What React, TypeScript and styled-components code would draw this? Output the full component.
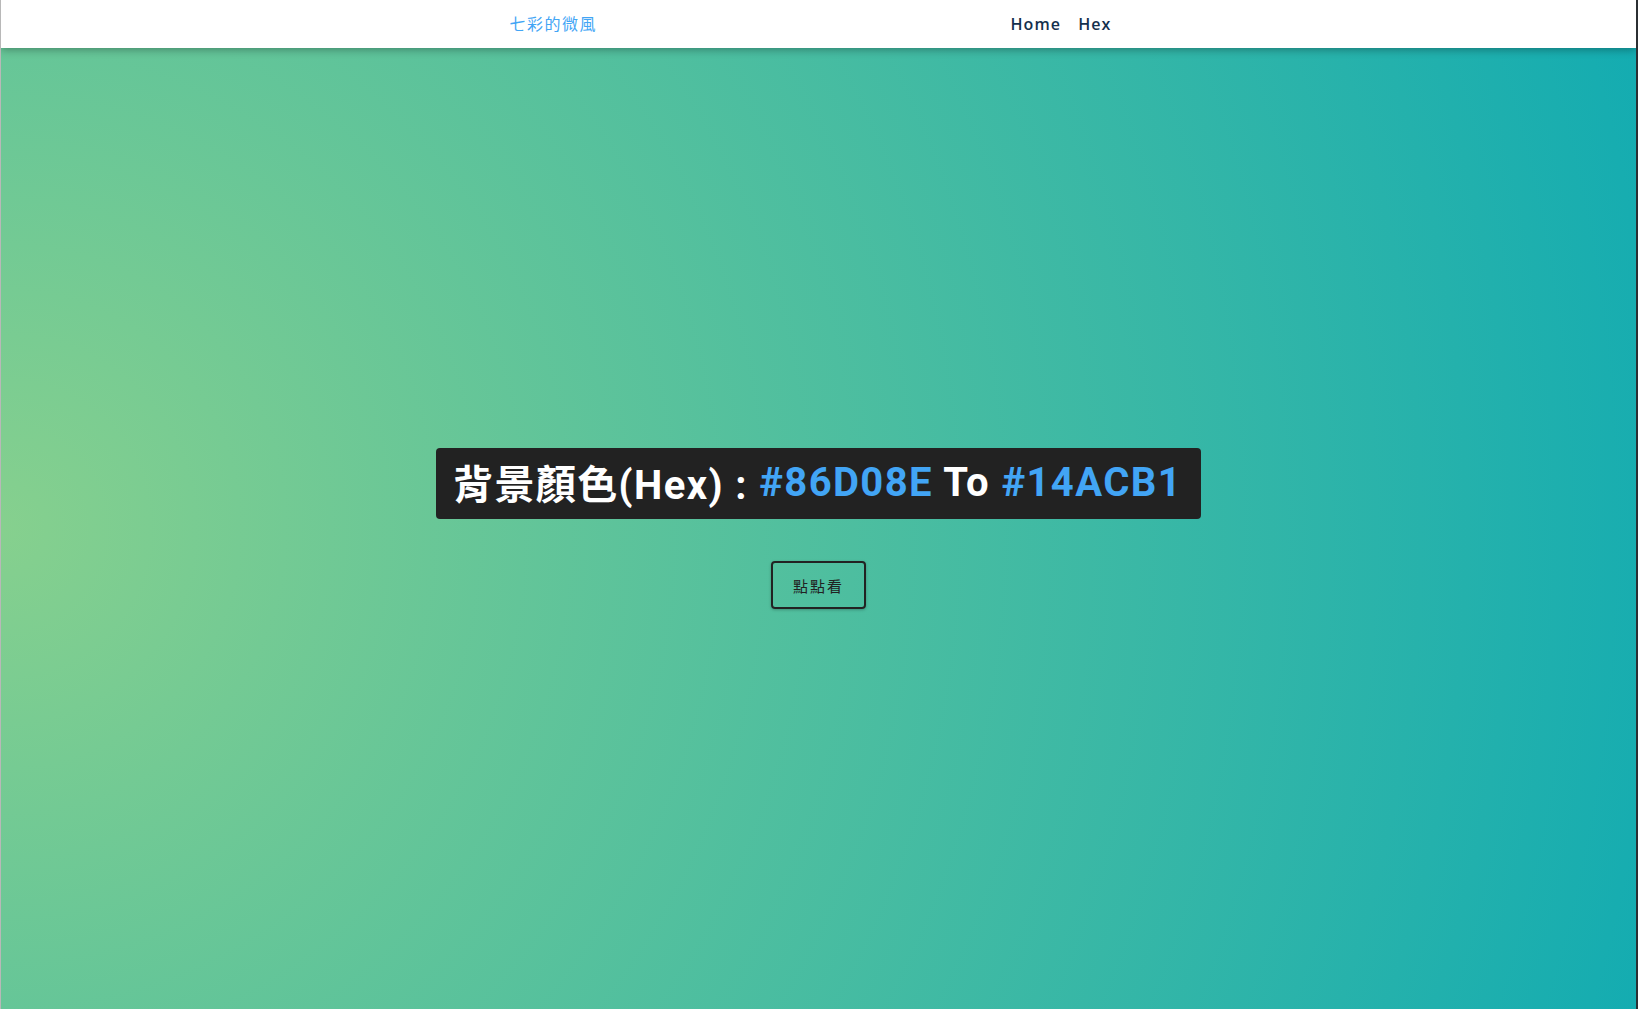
import React, { useState } from "react";
import styled, { createGlobalStyle } from "styled-components";

const GlobalStyle = createGlobalStyle`
  * {
    box-sizing: border-box;
  }
  html,
  body {
    margin: 0;
    padding: 0;
    height: 100%;
  }
  body {
    font-family: Roboto, "Noto Sans CJK TC", sans-serif;
    border-left: 1px solid #b8b8b8;
    border-right: 2px solid #2b2f33;
    overflow: hidden;
  }
`;

const Page = styled.div`
  display: flex;
  flex-direction: column;
  height: 100vh;
`;

const Header = styled.header`
  position: relative;
  z-index: 2;
  height: 48px;
  flex-shrink: 0;
  background: #fff;
  box-shadow: 0 2px 8px rgba(0, 0, 0, 0.3);
`;

const HeaderInner = styled.div`
  display: flex;
  justify-content: space-between;
  align-items: center;
  width: 618px;
  height: 100%;
  margin: 0 auto;
  padding: 0 16px 0 0;
`;

const Brand = styled.a`
  font-family: "Noto Sans CJK TC", sans-serif;
  font-size: 16px;
  letter-spacing: 1.5px;
  color: #42a5f5;
  text-decoration: none;
  margin-top: -3px;
`;

const Nav = styled.nav`
  display: flex;
  gap: 17px;
`;

const NavLink = styled.a`
  font-family: "Open Sans", sans-serif;
  font-size: 16px;
  font-weight: 600;
  letter-spacing: 1.1px;
  color: #14304d;
  text-decoration: none;
`;

const Main = styled.main<{ $from: string; $to: string }>`
  flex: 1;
  display: flex;
  flex-direction: column;
  align-items: center;
  justify-content: center;
  gap: 42px;
  background: radial-gradient(
    circle farthest-corner at left center,
    ${(p) => p.$from},
    ${(p) => p.$to}
  );
`;

const Title = styled.h1`
  margin: 0;
  height: 71px;
  display: flex;
  align-items: center;
  padding: 0 19px 3px 17px;
  background: #222;
  border-radius: 4px;
  color: #fff;
  font-family: Roboto, "Noto Sans CJK TC", sans-serif;
  font-size: 40px;
  font-weight: 700;
  letter-spacing: 1.4px;
  white-space: pre;
`;

const HexCode = styled.span`
  color: #42a5f5;
`;

const Button = styled.button`
  width: 95px;
  height: 48px;
  background: transparent;
  border: 2px solid #222;
  border-radius: 4px;
  box-shadow: 0 1px 3px rgba(0, 0, 0, 0.25);
  font-family: "Noto Sans CJK TC", sans-serif;
  font-size: 15px;
  letter-spacing: 2px;
  color: #222;
  cursor: pointer;
`;

const palette = [
  ["#86D08E", "#14ACB1"],
  ["#F5A3C7", "#6C5CE7"],
  ["#FFD36E", "#FF6B6B"],
];

function App() {
  const [index, setIndex] = useState(0);
  const [from, to] = palette[index];

  return (
    <>
      <GlobalStyle />
      <Page>
        <Header>
          <HeaderInner>
            <Brand href="#">七彩的微風</Brand>
            <Nav>
              <NavLink href="#">Home</NavLink>
              <NavLink href="#">Hex</NavLink>
            </Nav>
          </HeaderInner>
        </Header>
        <Main $from={from} $to={to}>
          <Title>
            背景顏色(Hex) : <HexCode>{from}</HexCode> To <HexCode>{to}</HexCode>
          </Title>
          <Button onClick={() => setIndex((index + 1) % palette.length)}>
            點點看
          </Button>
        </Main>
      </Page>
    </>
  );
}

export default App;
